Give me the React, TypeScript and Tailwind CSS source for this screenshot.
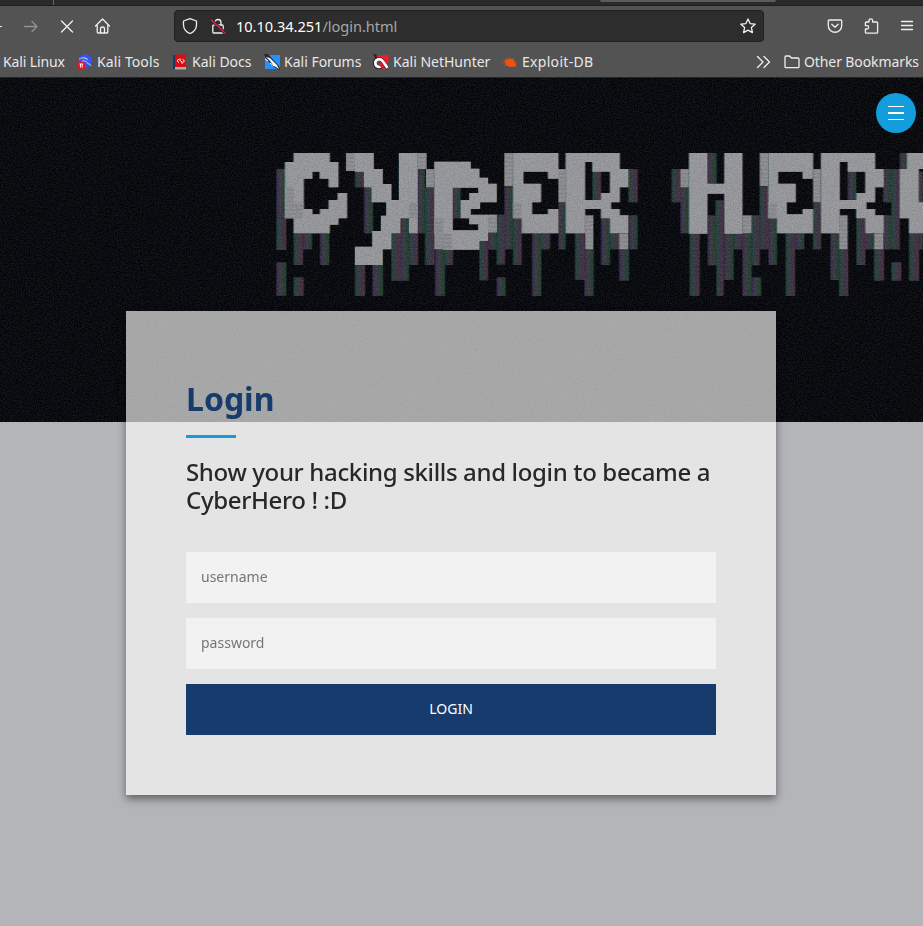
import React from "react";

type Bar = [number, number, number, number];

const SOFT = "#9c9da0";

// Each section of the banner artwork has its own origin (x, y) in third-pixels.
const sections: { x: number; y: number; dark: Bar[]; light: Bar[]; shapes: string[] }[] = [
  {
    x: 0,
    y: 0,
    dark: [
      [34, 87, 30, 148], [34, 235, 30, 95], [34, 367, 30, 100], [86, 280, 28, 95], [114, 280, 27, 48],
      [86, 412, 30, 56], [165, 280, 28, 95], [270, 95, 27, 47], [297, 142, 27, 138], [270, 375, 30, 93],
      [322, 375, 32, 93], [379, 280, 27, 142], [406, 235, 26, 187], [432, 280, 27, 95], [458, 87, 22, 193],
      [480, 142, 28, 233], [510, 328, 30, 140], [540, 328, 24, 47],
    ],
    light: [
      [244, 39, 26, 54], [60, 140, 26, 95], [86, 187, 28, 48], [458, 39, 27, 48], [483, 87, 25, 55],
      [432, 187, 26, 48], [508, 235, 28, 93], [536, 280, 24, 48],
    ],
    shapes: [
      "M86 39H194V66H220V142H191V116H164V95H142V116H116V207H142V223H165V207H191V180H218V159H246V235H220V254H194V280H86V235H60V66H86Z",
      "M244 39H326V87H353V132H379V180H402V39H458V280H432V235H406V280H379V328H353V375H270V320H322V273H348V227H364V187H320V142H297V95H270V93H244Z",
    ],
  },
  {
    x: 465,
    y: 15,
    dark: [[98, 128, 24, 92], [178, 288, 26, 118], [204, 262, 26, 52], [230, 209, 25, 150], [230, 397, 27, 56]],
    light: [[204, 212, 26, 50], [43, 220, 27, 46], [70, 266, 26, 48]],
    shapes: [
      "M43 50H152V71H178V98H204V116H230V172H180V192H152V209H230V262H204V288H178V314H70V266H43Z M98 128H175V144H148V165H122V220H148V238H175V256H98Z",
    ],
  },
  {
    x: 660,
    y: 0,
    dark: [
      [58, 142, 26, 186], [84, 235, 26, 140], [141, 280, 28, 188], [169, 280, 26, 48], [220, 187, 22, 141],
      [270, 280, 28, 140], [298, 328, 28, 140], [322, 95, 26, 85], [348, 235, 27, 140], [375, 280, 27, 48],
      [402, 328, 30, 94], [430, 87, 28, 100], [432, 226, 26, 102], [560, 87, 26, 100], [586, 142, 26, 138],
      [614, 280, 30, 188],
    ],
    light: [
      [58, 39, 26, 100], [84, 187, 26, 48], [220, 87, 22, 100], [300, 226, 25, 102], [402, 280, 28, 48],
      [586, 87, 26, 55], [614, 187, 24, 48],
    ],
    shapes: [
      "M84 39H220V116H189V95H115V131H168V187H141V223H189V207H220V280H110V235H84Z",
      "M242 39H404V87H430V142H404V187H378V207H404V226H430V280H375V235H348V207H300V280H242Z M300 66V180H348V159H375V95H322V66Z",
    ],
  },
  {
    x: 1200,
    y: 15,
    dark: [[127, 24, 28, 92], [151, 166, 26, 46]],
    light: [],
    shapes: ["M72 24H127V116H178V24H232V266H178V146H127V266H72Z"],
  },
  {
    x: 1314,
    y: 0,
    dark: [
      [14, 226, 26, 150], [40, 226, 22, 242], [62, 280, 30, 140], [92, 280, 25, 48], [118, 280, 28, 188],
      [146, 226, 24, 150], [146, 412, 28, 56], [170, 142, 26, 186], [196, 235, 26, 140], [248, 280, 28, 188],
      [276, 280, 28, 48], [330, 187, 24, 141], [382, 280, 26, 140], [408, 328, 28, 140], [434, 95, 26, 85],
      [460, 235, 27, 140], [487, 280, 26, 48], [513, 328, 30, 94], [540, 87, 25, 100], [565, 87, 25, 241],
      [540, 226, 25, 102], [565, 367, 30, 55], [590, 39, 24, 48], [618, 280, 30, 142], [648, 280, 12, 48],
      [647, 95, 13, 92],
    ],
    light: [
      [118, 226, 28, 54], [170, 39, 26, 100], [196, 187, 26, 48], [330, 87, 24, 100], [408, 226, 26, 102],
      [513, 280, 28, 48],
    ],
    shapes: [
      "M196 39H330V116H299V95H225V131H278V187H251V223H299V207H330V280H222V235H196Z",
      "M354 39H516V87H542V142H516V187H490V207H516V226H542V280H487V235H460V207H410V280H354Z M410 66V180H460V159H487V95H434V66Z",
      "M612 39H662V87H647V187H662V280H618V235H590V87H612Z",
    ],
  },
];

function Banner() {
  return (
    <svg className="block h-[344px] w-full" viewBox="0 0 923 344" aria-hidden="true">
      <defs>
        <linearGradient id="ga">
          <stop offset="0" stopColor="#45407a" />
          <stop offset=".45" stopColor="#685464" />
          <stop offset=".55" stopColor="#3c5e50" />
          <stop offset="1" stopColor="#2d5f47" />
        </linearGradient>
        <linearGradient id="gb">
          <stop offset="0" stopColor="#2a6350" />
          <stop offset=".4" stopColor="#4c5d66" />
          <stop offset=".6" stopColor="#59486f" />
          <stop offset="1" stopColor="#78454d" />
        </linearGradient>
        <pattern id="dots" width="6" height="12" patternUnits="userSpaceOnUse">
          <rect width="3" height="6" fill="#07080c" fillOpacity=".5" />
          <rect x="3" y="6" width="3" height="6" fill="#07080c" fillOpacity=".5" />
          <rect x="3" width="3" height="3" fill="#aaa" fillOpacity=".1" />
        </pattern>
        <pattern id="scan" width="12" height="12" patternUnits="userSpaceOnUse">
          <rect width="12" height="12" fill="#929397" />
          <rect y="3" width="12" height="4" fill="#86878c" />
        </pattern>
        <filter id="grain" x="0" y="0" width="100%" height="100%" colorInterpolationFilters="sRGB">
          <feTurbulence type="fractalNoise" baseFrequency=".75" numOctaves="2" seed="4" />
          <feColorMatrix values="1.6 0 0 0 -.4  1.6 0 0 0 -.4  1.6 0 0 0 -.39  0 0 0 0 .11" />
        </filter>
        <filter id="soft">
          <feGaussianBlur stdDeviation="0.4" />
        </filter>
      </defs>
      <rect width="923" height="344" fill="#010206" />
      <g filter="url(#soft)">
        <g transform="translate(265 62) scale(.33333)">
          <g opacity=".82">
            {sections.map((s, i) => (
              <g key={i} transform={`translate(${s.x} ${s.y})`}>
                {s.dark.map(([x, y, w, h], j) => (
                  <g key={j}>
                    <rect x={x} y={y} width={w} height={h} fill={j % 2 ? "url(#gb)" : "url(#ga)"} />
                    <rect x={x} y={y} width={w} height={h} fill="url(#dots)" />
                  </g>
                ))}
              </g>
            ))}
          </g>
          {sections.map((s, i) => (
            <g key={i} transform={`translate(${s.x} ${s.y})`}>
              {s.shapes.map((d, j) => (
                <g key={j} fillRule="evenodd">
                  <path d={d} fill="#2f6f80" transform="translate(-1.5 0)" opacity=".6" />
                  <path d={d} fill="#8a5f38" transform="translate(1.5 0)" opacity=".6" />
                  <path d={d} fill={SOFT} />
                </g>
              ))}
              {s.light.map(([x, y, w, h], j) => (
                <rect key={j} x={x} y={y} width={w} height={h} fill="url(#scan)" />
              ))}
            </g>
          ))}
        </g>
      </g>
      <rect width="923" height="344" filter="url(#grain)" />
    </svg>
  );
}

const line = {
  fill: "none",
  stroke: "#f0f0f0",
  strokeWidth: 1.3,
  strokeLinecap: "round" as const,
  strokeLinejoin: "round" as const,
};

function ToolsIcon() {
  return (
    <svg viewBox="0 0 16 16" className="size-4">
      <circle cx="8.2" cy="7" r="6.8" fill="#3b52f5" />
      <path d="M2 5c4-1.600 7-1.500 9 1.300M5 7c3.500-.5 5 .6 6 3 1.600-.5 2.600.5 3 2M6.500 3.500l4 1.500" fill="none" stroke="#b9c6ff" strokeWidth="1" />
      <circle cx="4.200" cy="11.500" r="4" fill="#ee1322" />
      <path d="M2.500 10h3.700M3.500 10v3.500M5.200 10v3.500" stroke="#fff" strokeWidth=".9" />
    </svg>
  );
}

function DocsIcon() {
  return (
    <svg viewBox="0 0 16 16" className="size-4">
      <path d="M1 1h2.500v14H1z" fill="#17396b" />
      <path d="M3.500 .5h10.500v12.500H3.500z" fill="#dc0d12" />
      <path d="M3 13h11v2.500H3z" fill="#b9a8a4" />
      <path d="M7 5 5 6.800 7 8.500M8 4.500v2l2 1.200v2M10.500 5.200l2 1.800-2 1.800" fill="none" stroke="#fff" strokeWidth="1" />
    </svg>
  );
}

function ForumsIcon() {
  return (
    <svg viewBox="0 0 16 16" className="size-4">
      <path d="M1 1h15v12l-3 2H1z" fill="#2492fb" />
      <path d="M0 0h4l11 12 1 4-5-2L2 5z" fill="#252b33" />
      <path d="M2 3l4 1 7 7 2 4-5-3-4-5z" fill="#f4f5f7" />
      <path d="M1 5l3 2M6 9l4 3" stroke="#fff" />
    </svg>
  );
}

function HunterIcon() {
  return (
    <svg viewBox="0 0 16 16" className="size-4">
      <path d="M0 0l5 1-2 4z" fill="#202022" />
      <path d="M3 1.500 16 1l-1.500 12-4 1.500z" fill="#ef1e2d" />
      <path d="M14.500 14.500 9.500 7C7 3.500 2 5 2 9s4 5.500 6.500 3.500" fill="none" stroke="#1d1d20" strokeWidth="3.800" />
      <path d="M14.500 14 10 7.500C7.500 3.700 2.300 5 2.300 9c0 3.500 3.700 5 6.200 3" fill="none" stroke="#fff" strokeWidth="2.700" />
      <path d="m5 9 3-1 5 7H9z" fill="#d71c2b" />
    </svg>
  );
}

function ExploitIcon() {
  return (
    <svg viewBox="0 0 16 16" className="size-4">
      <path d="m3 4.500 3 1 2-1.500 4 2 1 3 1.700 1.500-1.200.5 1 2-2.500-1-1 1-2-.5-2 1-.5-1.500-2.500-.5-.5-2L2 7.500l2-.5z" fill="#f4510b" />
      <path d="M1 5.500 4 7M.5 8.500H5M2 12l3-2M6 3l2 3M12 4l-1 3M15 8l-3 1" stroke="#c8521f" strokeWidth=".7" />
    </svg>
  );
}

function Bookmark({ icon, label, box }: { icon?: React.ReactNode; label: string; box: string }) {
  return (
    <div className={`flex shrink-0 items-center gap-1 whitespace-nowrap ${box}`}>
      {icon}
      <span>{label}</span>
    </div>
  );
}

function Browser() {
  return (
    <header className="h-[78px] overflow-hidden border-b border-[#252528] bg-[#535353] font-['Noto_Sans',sans-serif] text-[#e8e8e8]">
      <div className="flex h-1.5 border-b border-[#1d1d1d] bg-[#2a2a2a]">
        <div className="w-[54px] border-r border-[#666]" />
        <div className="ml-[546px] h-0.5 w-[176px] rounded-b bg-[#5b5b5b]" />
      </div>
      <div className="flex h-10 items-center">
        <div className="h-px w-0.5 bg-[#eee]" />
        <svg viewBox="0 0 16 16" className="ml-[21px] size-4" {...line} stroke="#929292">
          <path d="M1.500 8.500H14M9 3.500l5 5-5 5" />
        </svg>
        <svg viewBox="0 0 16 16" className="ml-5 size-4" {...line}>
          <path d="m2.500 3 11 11m0-11-11 11" />
        </svg>
        <svg viewBox="0 0 16 16" className="ml-[19px] size-4" {...line}>
          <path d="m1.500 8 7-7 7 7M3.200 7v7c0 .6.300 1 1 1h8.600c.7 0 1-.4 1-1V7M6.500 15v-4c0-2.700 4-2.700 4 0v4" />
        </svg>
        <div className="ml-[64px] flex h-8 w-[590px] items-center rounded border border-[#202020] bg-[#2d2d2d] pl-[7px] pr-[7px]">
          <svg viewBox="0 0 16 16" className="size-4" {...line}>
            <path d="M8 .7 14.500 3v4c0 4-3 7.500-6.500 8.500C4.500 14.500 1.500 11 1.500 7V3z" />
          </svg>
          <svg viewBox="0 0 16 16" className="ml-3 size-4" {...line}>
            <path d="M5 7V4.500c0-4 6-4 6 0V7M3.800 7h8.400c.6 0 1 .4 1 1v6c0 .6-.4 1-1 1H3.800c-.6 0-1-.4-1-1V8c0-.6.400-1 1-1z" />
            <path d="m1.500 2 13.500 13" stroke="#2d2d2d" strokeWidth="3.200" />
            <path d="m1.500 2 13.500 13" stroke="#e0244e" strokeWidth="1.400" />
          </svg>
          <span className="ml-[10px] pb-px text-[14.6px] leading-5 tracking-[-0.04px] text-white">
            10.10.34.251<span className="text-[#a6a6a6]">/login.html</span>
          </span>
          <svg viewBox="0 0 16 16" className="ml-auto size-4" {...line}>
            <path d="m8 1 2.100 4.600 5 .6-3.700 3.400 1 5L8 12.100l-4.400 2.500 1-5L.9 6.200l5-.6z" />
          </svg>
        </div>
        <svg viewBox="0 0 16 16" className="ml-[63px] size-4" {...line}>
          <path d="M2.300 2h11.400c.7 0 1 .4 1 1v4.500c0 9-13.400 9-13.400 0V3c0-.6.300-1 1-1zM4.800 6.300 8 9.300l3.200-3" />
        </svg>
        <svg viewBox="0 0 16 16" className="ml-5 size-4" {...line}>
          <path d="M6 4V2.500c0-2.300 3.600-2.300 3.600 0V4h4c.6 0 1 .4 1 1v9.300c0 .5-.4.900-1 .9H3.400c-.6 0-1-.4-1-.9V11h1.700c2.100 0 2.100-3.300 0-3.300H2.400V5c0-.6.400-1 1-1z" />
        </svg>
        <svg viewBox="0 0 16 16" className="ml-5 size-4" {...line}>
          <path d="M2.500 3.500h11M2.500 7.500h11M2.500 11.500h11" />
        </svg>
      </div>
      <div className="flex h-[31px] items-center pl-[3px] text-[14px] leading-5">
        <Bookmark label="Kali Linux" box="w-[74px] tracking-[-0.13px]" />
        <Bookmark icon={<ToolsIcon />} label="Kali Tools" box="w-[95px] tracking-[0.1px]" />
        <Bookmark icon={<DocsIcon />} label="Kali Docs" box="w-[92px]" />
        <Bookmark icon={<ForumsIcon />} label="Kali Forums" box="w-[109px]" />
        <Bookmark icon={<HunterIcon />} label="Kali NetHunter" box="w-[129px]" />
        <Bookmark icon={<ExploitIcon />} label="Exploit-DB" box="w-[100px] tracking-[0.3px]" />
        <svg viewBox="0 0 16 16" className="ml-[153px] size-4" {...line}>
          <path d="m2.500 2.500 5.500 5.500-5.500 5.500M9 2.500 14.500 8 9 13.500" />
        </svg>
        <svg viewBox="0 0 16 16" className="ml-[13px] size-4" {...line}>
          <path d="M1 12.700V3c0-.6.400-1 1-1h3.500l2 2H14c.6 0 1 .4 1 1v7.700c0 .6-.4 1-1 1H2c-.6 0-1-.4-1-1z" />
        </svg>
        <span className="ml-1 whitespace-nowrap tracking-[-0.1px]">Other Bookmarks</span>
      </div>
    </header>
  );
}

export default function App() {
  return (
    <div className="h-[926px] w-[923px] overflow-hidden bg-[#b4b5b9] font-['Noto_Sans',sans-serif]">
      <Browser />
      <main className="relative">
        <Banner />
        <button aria-label="Menu" className="absolute left-[876px] top-[15px] flex size-10 flex-col items-center justify-center gap-[5px] rounded-full bg-[#149ddd]">
          <span className="h-[1.5px] w-4 bg-white" />
          <span className="h-[1.5px] w-4 bg-white" />
          <span className="h-[1.5px] w-4 bg-white" />
        </button>
        <section className="relative -mt-[111px] ml-[126px] h-[484px] w-[650px] bg-[#fffffd]/64 px-[60px] pt-[69px]">
          <div className="pointer-events-none absolute inset-0 shadow-[0_4px_8px_0_rgba(0,0,0,0.45)] [clip-path:polygon(-20px_-20px,670px_-20px,670px_504px,-20px_504px,-20px_0,0_0,0_484px,650px_484px,650px_0,-20px_0)]" />
          <h1 className="text-[32px] font-bold leading-[38px] text-[#173b6c]">Login</h1>
          <div className="mt-[17px] h-[3px] w-[50px] bg-[#149ddd]" />
          <h2 className="mt-[20px] whitespace-nowrap text-[24px] font-medium leading-[28px] tracking-[-0.35px] text-[#272829]">
            Show your hacking skills and login to became a
            <br />
            CyberHero ! :D
          </h2>
          <form className="mt-[38px] flex flex-col gap-[15px] text-[14px]" onSubmit={(e) => e.preventDefault()}>
            <input aria-label="username" placeholder="username" className="h-[51px] bg-[#f2f2f2] px-[15px] pb-0.5 placeholder:text-[#757575]" />
            <input aria-label="password" type="password" placeholder="password" className="h-[51px] bg-[#f2f2f2] px-[15px] pb-0.5 placeholder:text-[#757575]" />
            <button className="h-[51px] bg-[#173b6c] pb-0.5 text-white">LOGIN</button>
          </form>
        </section>
      </main>
    </div>
  );
}
